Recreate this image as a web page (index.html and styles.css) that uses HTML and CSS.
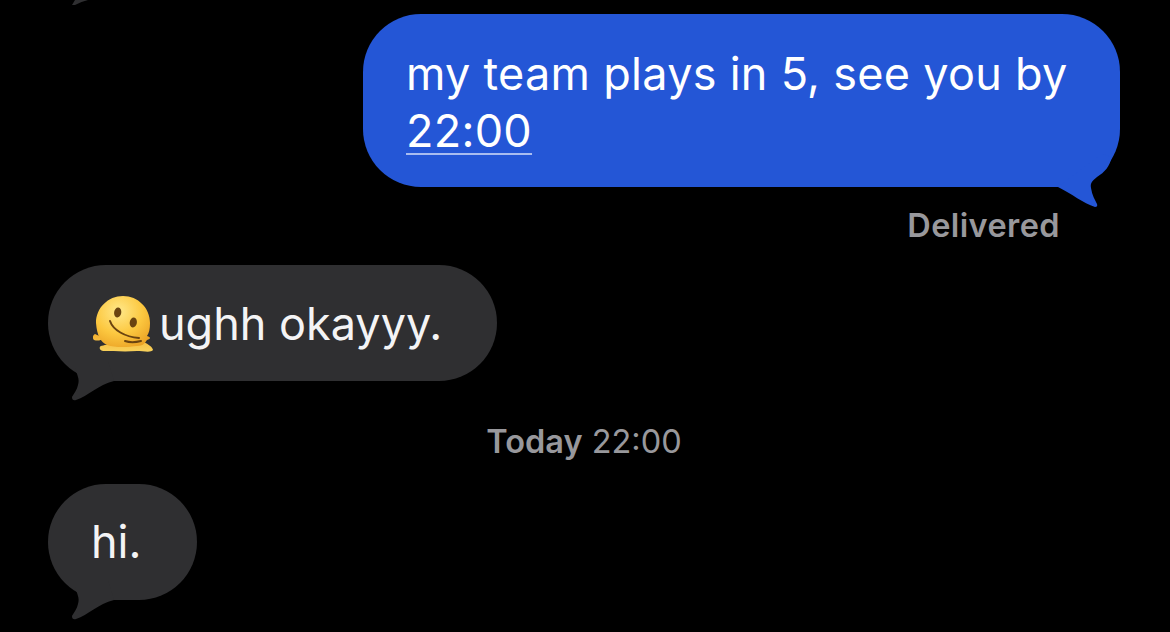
FILE: index.html
```html
<!DOCTYPE html>
<html lang="en">
<head>
  <meta charset="UTF-8">
  <title>Messages</title>
  <link rel="stylesheet" href="styles.css">
</head>
<body>
  <svg class="tail-cut" viewBox="0 0 20 5" width="20" height="5"><path d="M0 5 L3 0 H16 Q8 2 3 5 Z" fill="#2f2f31"/></svg>

  <main class="thread">
    <div class="bubble bubble-out">
      my team plays in 5, see you by <a class="time-link">22:00</a>
      <svg class="tail tail-out" viewBox="0 0 75 60" width="75" height="60">
        <path d="M8 37 L52 4 L62 7 C59 17 55 22 47 27 C42 31 40 33 41 38 C42 45 45 50 47 54 Q48 57 45 57 C33 53 22 44 8 37 Z" fill="#2456d6"/>
      </svg>
    </div>
    <div class="status">Delivered</div>

    <div class="bubble bubble-in bubble-melt">
      <svg class="emoji" viewBox="0 0 60 56" width="60" height="56">
        <defs>
          <radialGradient id="face" cx="0.42" cy="0.3" r="0.8">
            <stop offset="0" stop-color="#ffe88a"/>
            <stop offset="0.55" stop-color="#fcc840"/>
            <stop offset="1" stop-color="#eaa023"/>
          </radialGradient>
          <linearGradient id="melt" x1="0" y1="0" x2="0" y2="1">
            <stop offset="0" stop-color="#f5b02e"/>
            <stop offset="1" stop-color="#f8d25c"/>
          </linearGradient>
        </defs>
        <path d="M2 38 C6 40 8 40 10 42 C8 45 4 45 1 44 C-1 42 0 39 2 38 Z M8 50 C14 48 40 44 50 46 C56 48 60 52 60 54 C58 57 50 55 44 55 C32 56 20 55 10 55 C6 54 6 51 8 50 Z" fill="url(#melt)"/>
        <path d="M3 27 C3 12 15 0 30 0 C45 0 57 12 57 27 C57 33 56 37 54 40 C58 41 58 43 54 44 C52 47 50 50 44 50 C36 51 22 52 14 49 C8 46 4 40 3 27 Z" fill="url(#face)"/>
        <ellipse cx="24.7" cy="16.5" rx="3.6" ry="5" fill="#6b4410" transform="rotate(8 24.7 16.5)"/>
        <ellipse cx="40.3" cy="26.5" rx="3.6" ry="5" fill="#6b4410" transform="rotate(8 40.3 26.5)"/>
        <path d="M17 25 C20 34 32 41 46 42 M32 45 C38 47 44 46 48 45" fill="none" stroke="#6b4410" stroke-width="2" stroke-linecap="round"/>
      </svg>
      <span class="melt-text">ughh okayyy.</span>
      <svg class="tail tail-in" viewBox="0 0 70 40" width="70" height="40">
        <path d="M27 7 C29 14 32 18 30 24 C29 29 26 32 24 36 Q24 40 28 39 C40 35 50 24 66 20 L60 0 L20 0 Z" fill="#2f2f31"/>
      </svg>
    </div>

    <div class="stamp"><b>Today</b> 22:00</div>

    <div class="bubble bubble-in bubble-hi">
      hi.
      <svg class="tail tail-in" viewBox="0 0 70 40" width="70" height="40">
        <path d="M27 7 C29 14 32 18 30 24 C29 29 26 32 24 36 Q24 40 28 39 C40 35 50 24 66 20 L60 0 L20 0 Z" fill="#2f2f31"/>
      </svg>
    </div>
  </main>
</body>
</html>
```

FILE: styles.css
```css
html, body {
  margin: 0;
  height: 632px;
  overflow: hidden;
  background: #000;
}

body {
  position: relative;
  font-family: Inter, "Liberation Sans", sans-serif;
  color: #fff;
}

.thread {
  display: flex;
  flex-direction: column;
  padding: 14px 50px 0 48px;
}

.bubble {
  position: relative;
  box-sizing: border-box;
  font-size: 45px;
  line-height: 58px;
  border-radius: 58px;
  padding: 29px 43px;
}

.bubble-out {
  align-self: flex-end;
  width: 757px;
  padding: 31px 40px 28px 43px;
  line-height: 57px;
  background: #2456d6;
  letter-spacing: 0.28px;
}

.bubble-in {
  align-self: flex-start;
  background: #2f2f31;
  color: #f4f4f5;
}

.bubble-melt {
  display: flex;
  align-items: center;
  gap: 6px;
  width: 449px;
  height: 116px;
  padding: 0 0 0 45px;
}

.melt-text {
  padding-top: 2px;
}

.bubble-hi {
  width: 149px;
}

.time-link {
  text-decoration: underline;
  text-decoration-color: #a9bdf0;
  text-decoration-thickness: 2px;
  text-underline-offset: 6px;
}

.emoji {
  flex: none;
  margin-top: 2px;
}

.tail {
  position: absolute;
}

.tail-out {
  right: -5px;
  bottom: -23px;
}

.tail-in {
  left: 0;
  bottom: -20px;
}

.status {
  align-self: flex-end;
  margin: 20px 60px 20px 0;
  font-size: 32.5px;
  line-height: 38px;
  font-weight: 600;
  letter-spacing: 0.4px;
  color: #98989c;
}

.stamp {
  align-self: center;
  margin: 42px 0 23px;
  font-size: 32.5px;
  line-height: 38px;
  color: #98989c;
}

.stamp b {
  font-weight: 600;
}

.tail-cut {
  position: absolute;
  left: 72px;
  top: 0;
}
```
